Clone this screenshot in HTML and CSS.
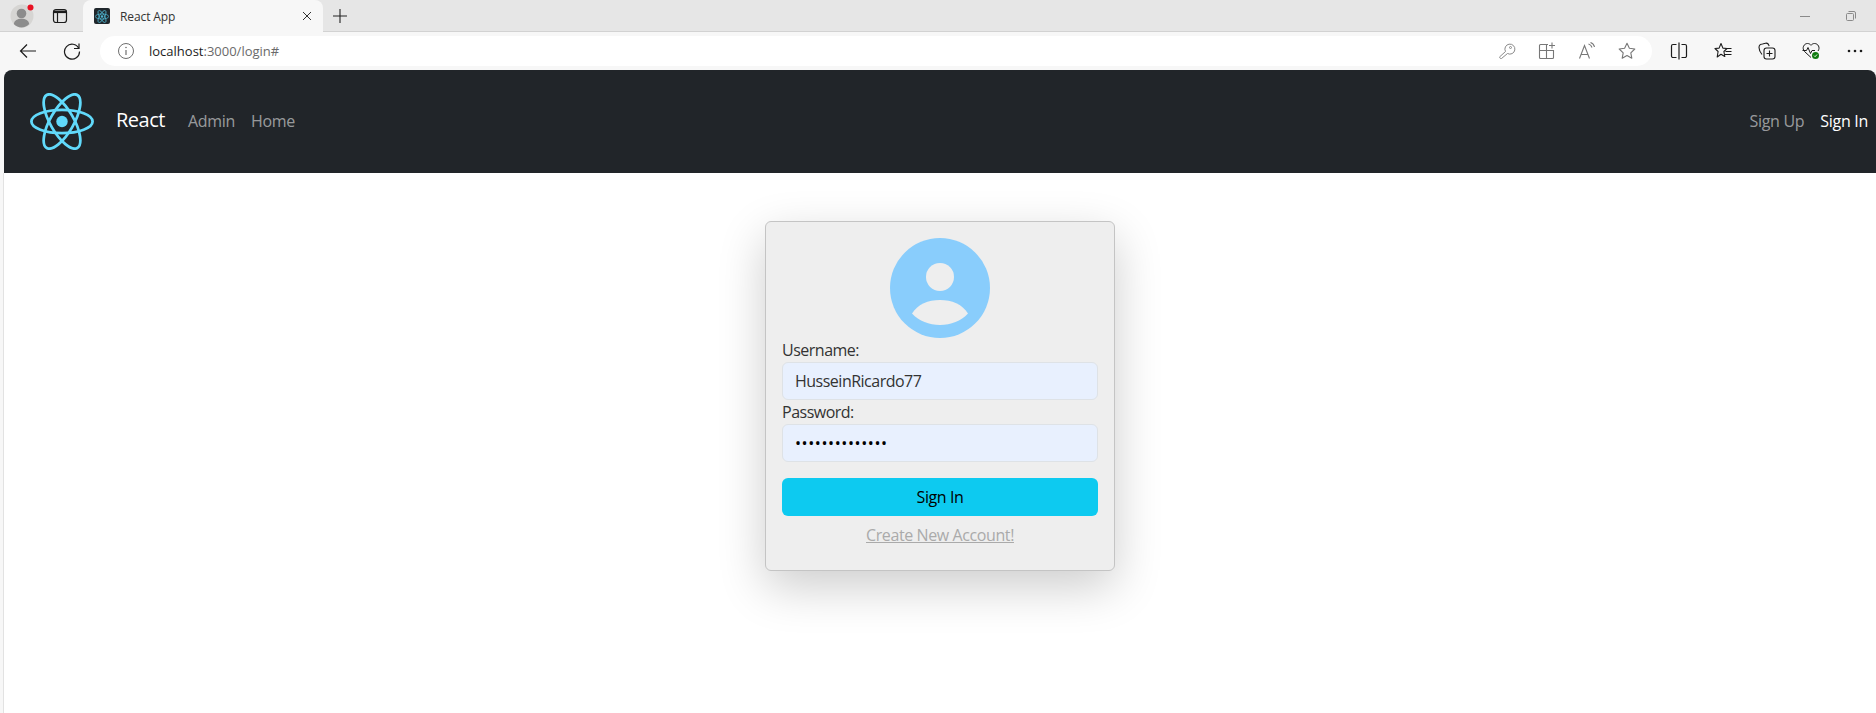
FILE: index.html
```html
<!DOCTYPE html>
<html lang="en">
<head>
    <meta charset="UTF-8">
    <title>React App</title>
    <link rel="stylesheet" href="styles.css">
</head>
<body>
    <svg class="sprite" aria-hidden="true">
        <symbol id="atom" viewBox="-11.5 -10.25 23 20.5">
            <circle r="2.05" fill="currentColor"/>
            <g fill="none" stroke="currentColor">
                <ellipse rx="11" ry="4.2"/>
                <ellipse rx="11" ry="4.2" transform="rotate(60)"/>
                <ellipse rx="11" ry="4.2" transform="rotate(120)"/>
            </g>
        </symbol>
    </svg>

    <!-- browser frame -->
    <div class="tabstrip">
        <div class="chrome-btn profile-btn">
            <svg class="icon-24" viewBox="0 0 24 24">
                <circle cx="12" cy="12" r="11.5" fill="#d6d5d3"/>
                <circle cx="11.5" cy="9.5" r="4.8" fill="#8c8c8c"/>
                <path d="M3.8 20c.6-3.6 3.6-5.2 7.7-5.2s7.1 1.6 7.7 5.2c-2 2.300-4.800 3.500-7.700 3.500S5.800 22.300 3.800 20z" fill="#8c8c8c"/>
                <circle cx="20.500" cy="3.500" r="3" fill="#e81123"/>
            </svg>
        </div>
        <div class="chrome-btn sidebar-btn">
            <svg class="icon-16" viewBox="0 0 16 16" fill="none" stroke="#1c1c1c">
                <rect x="1.500" y="1.500" width="13" height="13" rx="2.500" stroke-width="1.200"/>
                <path d="M1.500 3.800h13" stroke-width="2.600"/>
                <path d="M5.500 4v10" stroke-width="1.200"/>
            </svg>
        </div>
        <div class="tab">
            <div class="favicon">
                <svg class="icon-atom-small"><use href="#atom" stroke-width="1.300"/></svg>
            </div>
            <span class="tab-title">React App</span>
            <svg class="icon-10" viewBox="0 0 10 10" fill="none" stroke="#333" stroke-width="1">
                <path d="M1 1l8 8M9 1l-8 8"/>
            </svg>
        </div>
        <div class="chrome-btn newtab-btn">
            <svg class="icon-16" viewBox="0 0 16 16" fill="none" stroke="#222" stroke-width="1.100">
                <path d="M8 1v14M1 8h14"/>
            </svg>
        </div>
        <div class="window-controls">
            <div class="window-btn">
                <svg class="icon-10" viewBox="0 0 10 10" stroke="#8a8a8a" stroke-width="1"><path d="M0 5.500h10"/></svg>
            </div>
            <div class="window-btn">
                <svg class="icon-10" viewBox="0 0 10 10" fill="none" stroke="#8a8a8a" stroke-width="1">
                    <rect x=".500" y="2.500" width="7" height="7" rx="1"/>
                    <path d="M2.500 .500h5.500a1.500 1.500 0 0 1 1.500 1.500v5.500"/>
                </svg>
            </div>
        </div>
    </div>

    <div class="toolbar">
        <div class="tool-btn">
            <svg class="icon-18" viewBox="0 0 18 18" fill="none" stroke="#1c1c1c" stroke-width="1.200">
                <path d="M17 9H1.500M8 2.500L1.500 9 8 15.500"/>
            </svg>
        </div>
        <div class="tool-btn">
            <svg class="icon-18" viewBox="0 0 18 18" fill="none" stroke="#1c1c1c" stroke-width="1.200">
                <path d="M15.800 6.500A7.500 7.500 0 1 0 16.500 9.500"/>
                <path d="M16 1.500v5h-5"/>
            </svg>
        </div>
        <div class="address-bar">
            <svg class="icon-info" viewBox="0 0 18 18" fill="none" stroke="#6f6f6f" stroke-width="1">
                <circle cx="9" cy="9" r="7.500"/>
                <path d="M9 8v5" stroke-width="1.200"/>
                <circle cx="9" cy="5.500" r=".8" fill="#6f6f6f" stroke="none"/>
            </svg>
            <span class="url"><span class="url-host">localhost</span>:3000/login#</span>
            <div class="address-icons">
                <div class="address-btn">
                    <svg class="icon-18" viewBox="0 0 18 18" fill="none" stroke="#8a8a8a" stroke-width="1">
                        <path d="M7.500 9.500a5 5 0 1 1 2 2L3.500 16.500c-.8.500-2.300-.8-1.800-1.700z"/>
                        <circle cx="12.500" cy="5.500" r="1"/>
                    </svg>
                </div>
                <div class="address-btn">
                    <svg class="icon-18" viewBox="0 0 18 18" fill="none" stroke="#777" stroke-width="1.100">
                        <path d="M10 2.500H2.500a1 1 0 0 0-1 1v12a1 1 0 0 0 1 1h12a1 1 0 0 0 1-1V8.500H1.500M8.500 2.500v14"/>
                        <path d="M14 .5v6M11 3.500h6"/>
                    </svg>
                </div>
                <div class="address-btn">
                    <svg class="icon-18" viewBox="0 0 18 18" fill="none" stroke="#777" stroke-width="1.100">
                        <path d="M1.500 16.500L6.500 3.500l5 13M3.200 12.500h6.600"/>
                        <path d="M10.500 2c1.800.5 3 1.700 3.500 3.500M12.500 .5c2 .7 3.500 2.300 4 4.500"/>
                    </svg>
                </div>
                <div class="address-btn">
                    <svg class="icon-18" viewBox="0 0 18 18" fill="none" stroke="#777" stroke-width="1.100" stroke-linejoin="round">
                        <path d="M9 1.300l2.400 5 5.400.7-4 3.800 1 5.400L9 13.600l-4.800 2.600 1-5.400-4-3.800 5.400-.7z"/>
                    </svg>
                </div>
            </div>
        </div>
        <div class="tool-group">
            <div class="tool-btn">
                <svg class="icon-18" viewBox="0 0 18 18" fill="none" stroke="#1c1c1c" stroke-width="1.200">
                    <path d="M6.500 2.500H3a1.500 1.500 0 0 0-1.500 1.500v10A1.500 1.500 0 0 0 3 15.500h3.500M11.500 2.500H15A1.500 1.500 0 0 1 16.500 4v10a1.500 1.500 0 0 1-1.500 1.500h-3.500M9 .5v17"/>
                </svg>
            </div>
            <div class="tool-btn">
                <svg class="icon-18" viewBox="0 0 18 18" fill="none" stroke="#1c1c1c" stroke-width="1.100" stroke-linejoin="round">
                    <path d="M7 1.500l1.900 4.600 4.100.4-3.100 3 .9 5L7 12.300 3.200 15l.9-5.500L1 6.500l4.100-.4z"/>
                    <path d="M11.500 6.500h6M11.500 9.500h6M11 12.500h6.500"/>
                </svg>
            </div>
            <div class="tool-btn">
                <svg class="icon-18" viewBox="0 0 18 18" fill="none" stroke="#1c1c1c" stroke-width="1.100">
                    <rect x="6" y="6" width="11" height="11" rx="2.500"/>
                    <path d="M11.500 8.500v6M8.500 11.500h6"/>
                    <path d="M4 12.500C2 10 1 8 1 5.500 1 3.500 2.500 2 4.500 2l3-.8c1.500-.3 2.800.5 3.300 2l.3 1"/>
                </svg>
            </div>
            <div class="tool-btn">
                <svg class="icon-18" viewBox="0 0 18 18" fill="none" stroke="#1c1c1c" stroke-width="1">
                    <path d="M9 15.500L2.500 9.500C-.5 6 2 1.500 5.500 1.500 7 1.500 8.200 2.200 9 3.300c.8-1.100 2-1.800 3.500-1.800 3.500 0 6 4 3.500 7.500"/>
                    <path d="M.5 8.500h4l1.500-3 2.500 6 1.500-3h3"/>
                    <circle cx="13.500" cy="13.500" r="3.500" fill="#107c10" stroke="none"/>
                    <path d="M12 13.600l1.100 1.100 1.900-2.200" stroke="#fff" stroke-width=".9"/>
                </svg>
            </div>
            <div class="tool-btn tool-btn-last">
                <svg class="icon-18" viewBox="0 0 18 18" fill="#1c1c1c">
                    <circle cx="3" cy="9" r="1.300"/>
                    <circle cx="9" cy="9" r="1.300"/>
                    <circle cx="15" cy="9" r="1.300"/>
                </svg>
            </div>
        </div>
    </div>

    <!-- page -->
    <div class="page">
        <nav class="navbar">
            <svg class="logo"><use href="#atom"/></svg>
            <a class="brand" href="#">React</a>
            <a class="nav-link" href="#">Admin</a>
            <a class="nav-link" href="#">Home</a>
            <div class="nav-right">
                <a class="nav-link" href="#">Sign Up</a>
                <a class="nav-link active" href="#">Sign In</a>
            </div>
        </nav>

        <main class="content">
            <form class="login-card">
                <svg class="avatar" viewBox="0 0 100 100">
                    <circle cx="50" cy="50" r="50" fill="#89cdfc"/>
                    <circle cx="50" cy="39" r="14" fill="#eeeeee"/>
                    <path d="M22 75.500C28 66 38 62 50 62s22 4 28 13.500C71 83 61 87 50 87s-21-4-28-11.500z" fill="#eeeeee"/>
                </svg>
                <label for="username">Username:</label>
                <input id="username" type="text" value="HusseinRicardo77">
                <label for="password">Password:</label>
                <input id="password" type="password" value="abcdefghijklmn">
                <button type="button" class="signin-btn">Sign In</button>
                <a class="create-link" href="#">Create New Account!</a>
            </form>
        </main>
    </div>
</body>
</html>
```

FILE: styles.css
```css
* {
    box-sizing: border-box;
}

html, body {
    height: 100%;
}

body {
    margin: 0;
    display: flex;
    flex-direction: column;
    overflow: hidden;
    background-color: #f7f7f7;
    color: #212529;
    font-family: "Open Sans", "Noto Sans", sans-serif;
    font-size: 16px;
    letter-spacing: -0.4px;
}

.sprite {
    display: none;
}

.icon-10 {
    width: 10px;
    height: 10px;
}

.icon-16 {
    width: 16px;
    height: 16px;
}

.icon-18 {
    width: 18px;
    height: 18px;
}

.icon-24 {
    width: 24px;
    height: 24px;
}

/* tab strip */
.tabstrip {
    display: flex;
    flex: none;
    height: 32px;
    background-color: #e6e6e6;
    border-bottom: 1px solid #d2d2d2;
}

.chrome-btn {
    display: flex;
    align-items: center;
    justify-content: center;
}

.profile-btn {
    width: 44px;
}

.sidebar-btn {
    width: 32px;
    margin-right: 7px;
}

.newtab-btn {
    width: 34px;
}

.tab {
    display: flex;
    align-items: center;
    width: 240px;
    height: 32px;
    padding: 0 11px;
    background-color: #f7f7f7;
    border-radius: 8px 8px 0 0;
}

.favicon {
    display: flex;
    align-items: center;
    justify-content: center;
    width: 16px;
    height: 16px;
    margin-right: 10px;
    background-color: #20272c;
    border-radius: 2px;
    color: #4fb6d2;
}

.icon-atom-small {
    width: 14px;
    height: 13px;
}

.tab-title {
    flex: 1;
    font-size: 12px;
    letter-spacing: -0.1px;
    color: #333;
}

.window-controls {
    display: flex;
    margin-left: auto;
    padding-right: 2px;
}

.window-btn {
    display: flex;
    align-items: center;
    justify-content: center;
    width: 46px;
}

/* toolbar */
.toolbar {
    display: flex;
    flex: none;
    align-items: center;
    height: 38px;
    padding-left: 6px;
    background-color: #f7f7f7;
}

.tool-btn {
    display: flex;
    align-items: center;
    justify-content: center;
    width: 44px;
}

.tool-btn-last {
    width: 43px;
}

.tool-group {
    display: flex;
    margin-left: 5px;
}

.address-bar {
    display: flex;
    flex: 1;
    align-items: center;
    height: 30px;
    margin-left: 6px;
    padding: 0 5px 0 17px;
    background-color: #ffffff;
    border-radius: 15px;
}

.icon-info {
    width: 18px;
    height: 18px;
    margin-right: 14px;
}

.url {
    font-size: 13px;
    letter-spacing: 0;
    color: #6a6a6a;
}

.url-host {
    color: #1c1c1c;
}

.address-icons {
    display: flex;
    margin-left: auto;
}

.address-btn {
    display: flex;
    align-items: center;
    justify-content: center;
    width: 40px;
}

/* page */
.page {
    display: flex;
    flex: 1;
    flex-direction: column;
    margin-left: 3px;
}

.navbar {
    display: flex;
    flex: none;
    align-items: center;
    height: 103px;
    margin-left: 1px;
    padding: 0 8px 0 26px;
    background-color: #212529;
    border-radius: 8px 8px 0 0;
    letter-spacing: -0.3px;
}

.logo {
    width: 64px;
    height: 57px;
    margin-right: 22px;
    color: #61dafb;
}

.brand {
    margin-right: 23px;
    margin-bottom: 4px;
    font-size: 20px;
    letter-spacing: -0.5px;
    color: #ffffff;
    text-decoration: none;
}

.nav-link {
    margin-right: 16px;
    margin-bottom: 2px;
    color: rgba(255, 255, 255, 0.55);
    text-decoration: none;
}

.nav-right {
    display: flex;
    margin-left: auto;
}

.nav-right .nav-link:last-child {
    margin-right: 0;
}

.nav-link.active {
    color: #ffffff;
}

.content {
    display: flex;
    flex: 1;
    justify-content: center;
    align-items: flex-start;
    padding-top: 48px;
    background-color: #ffffff;
    border-left: 1px solid #e2e2e2;
}

.login-card {
    display: flex;
    flex-direction: column;
    width: 350px;
    padding: 16px 16px 23px;
    background-color: #eeeeee;
    border: 1px solid #c4c4c4;
    border-radius: 6px;
    box-shadow: 0 16px 48px rgba(0, 0, 0, 0.2);
}

.avatar {
    flex: none;
    align-self: center;
    width: 100px;
    height: 100px;
}

.login-card label {
    height: 24px;
    line-height: 24px;
    letter-spacing: -0.5px;
    color: #333333;
}

.login-card input {
    height: 38px;
    padding: 0 12px;
    background-color: #e8f0fe;
    border: 1px solid #dee2e6;
    border-radius: 6px;
    font-family: inherit;
    font-size: 16px;
    letter-spacing: -0.5px;
    color: #333333;
}

.login-card input[type="password"] {
    letter-spacing: 0.6px;
    color: #000000;
}

.signin-btn {
    height: 38px;
    margin-top: 16px;
    background-color: #0dcaf0;
    border: none;
    border-radius: 6px;
    font-family: inherit;
    font-size: 16px;
    letter-spacing: -0.4px;
    color: #000000;
}

.create-link {
    margin-top: 7px;
    line-height: 24px;
    text-align: center;
    color: #aaaaaa;
}
```
